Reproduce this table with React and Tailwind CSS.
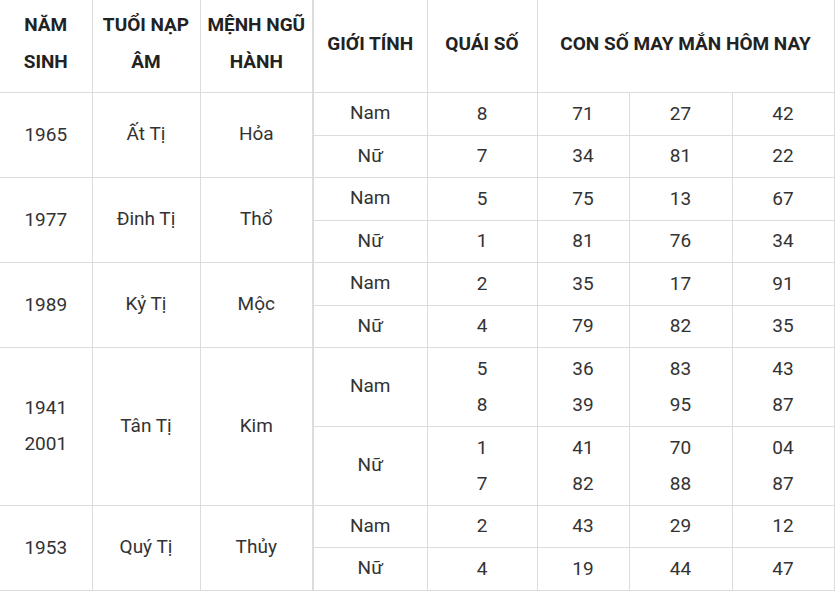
import React from 'react';

const groups = [
  {
    year: ['1965'],
    tuoi: 'Ất Tị',
    menh: 'Hỏa',
    rows: [
      { h: 'h-[43px]', gender: 'Nam', quai: ['8'], nums: [['71'], ['27'], ['42']] },
      { h: 'h-[42px]', gender: 'Nữ', quai: ['7'], nums: [['34'], ['81'], ['22']] },
    ],
  },
  {
    year: ['1977'],
    tuoi: 'Đinh Tị',
    menh: 'Thổ',
    rows: [
      { h: 'h-[43px]', gender: 'Nam', quai: ['5'], nums: [['75'], ['13'], ['67']] },
      { h: 'h-[42px]', gender: 'Nữ', quai: ['1'], nums: [['81'], ['76'], ['34']] },
    ],
  },
  {
    year: ['1989'],
    tuoi: 'Kỷ Tị',
    menh: 'Mộc',
    rows: [
      { h: 'h-[43px]', gender: 'Nam', quai: ['2'], nums: [['35'], ['17'], ['91']] },
      { h: 'h-[42px]', gender: 'Nữ', quai: ['4'], nums: [['79'], ['82'], ['35']] },
    ],
  },
  {
    year: ['1941', '2001'],
    tuoi: 'Tân Tị',
    menh: 'Kim',
    rows: [
      { h: 'h-[79px]', gender: 'Nam', quai: ['5', '8'], nums: [['36', '39'], ['83', '95'], ['43', '87']] },
      { h: 'h-[79px]', gender: 'Nữ', quai: ['1', '7'], nums: [['41', '82'], ['70', '88'], ['04', '87']] },
    ],
  },
  {
    year: ['1953'],
    tuoi: 'Quý Tị',
    menh: 'Thủy',
    rows: [
      { h: 'h-[42px]', gender: 'Nam', quai: ['2'], nums: [['43'], ['29'], ['12']] },
      { h: 'h-[43px]', gender: 'Nữ', quai: ['4'], nums: [['19'], ['44'], ['47']] },
    ],
  },
];

const Lines = ({ items }) => (
  <>
    {items.map((t, i) => (
      <div key={i} className="leading-[36px]">{t}</div>
    ))}
  </>
);

const cell = 'border border-[#dcdcdc] text-center align-middle p-0';

export default function App() {
  return (
    <div className="bg-white w-[839px] h-[592px] overflow-hidden" style={{ fontFamily: 'Roboto, "Noto Sans", sans-serif' }}>
      <table className="border-collapse table-fixed w-[834px] text-[19px] text-[#333]">
        <colgroup>
          <col className="w-[92px]" />
          <col className="w-[108px]" />
          <col className="w-[113px]" />
          <col className="w-[114px]" />
          <col className="w-[110px]" />
          <col className="w-[92px]" />
          <col className="w-[103px]" />
          <col className="w-[102px]" />
        </colgroup>
        <thead>
          <tr className="h-[92px] font-bold text-[#222] leading-[37px]">
            <th className={`${cell} pb-[5px] border-t-0 border-l-0`}>NĂM<br />SINH</th>
            <th className={`${cell} pb-[5px] border-t-0`}>TUỔI NẠP<br />ÂM</th>
            <th className={`${cell} pb-[5px] border-t-0 border-r-2`}>MỆNH NGŨ<br />HÀNH</th>
            <th className={`${cell} pb-[5px] border-t-0`}>GIỚI TÍNH</th>
            <th className={`${cell} pb-[5px] border-t-0`}>QUÁI SỐ</th>
            <th className={`${cell} pb-[5px] border-t-0`} colSpan={3}>CON SỐ MAY MẮN HÔM NAY</th>
          </tr>
        </thead>
        <tbody>
          {groups.map((g) =>
            g.rows.map((r, i) => (
              <tr key={g.tuoi + i} className={r.h}>
                {i === 0 && (
                  <>
                    <td className={`${cell} border-l-0`} rowSpan={2}><Lines items={g.year} /></td>
                    <td className={cell} rowSpan={2}>{g.tuoi}</td>
                    <td className={`${cell} border-r-2`} rowSpan={2}>{g.menh}</td>
                  </>
                )}
                <td className={cell}>{r.gender}</td>
                <td className={cell}><Lines items={r.quai} /></td>
                {r.nums.map((n, k) => (
                  <td key={k} className={cell}><Lines items={n} /></td>
                ))}
              </tr>
            ))
          )}
        </tbody>
      </table>
    </div>
  );
}
